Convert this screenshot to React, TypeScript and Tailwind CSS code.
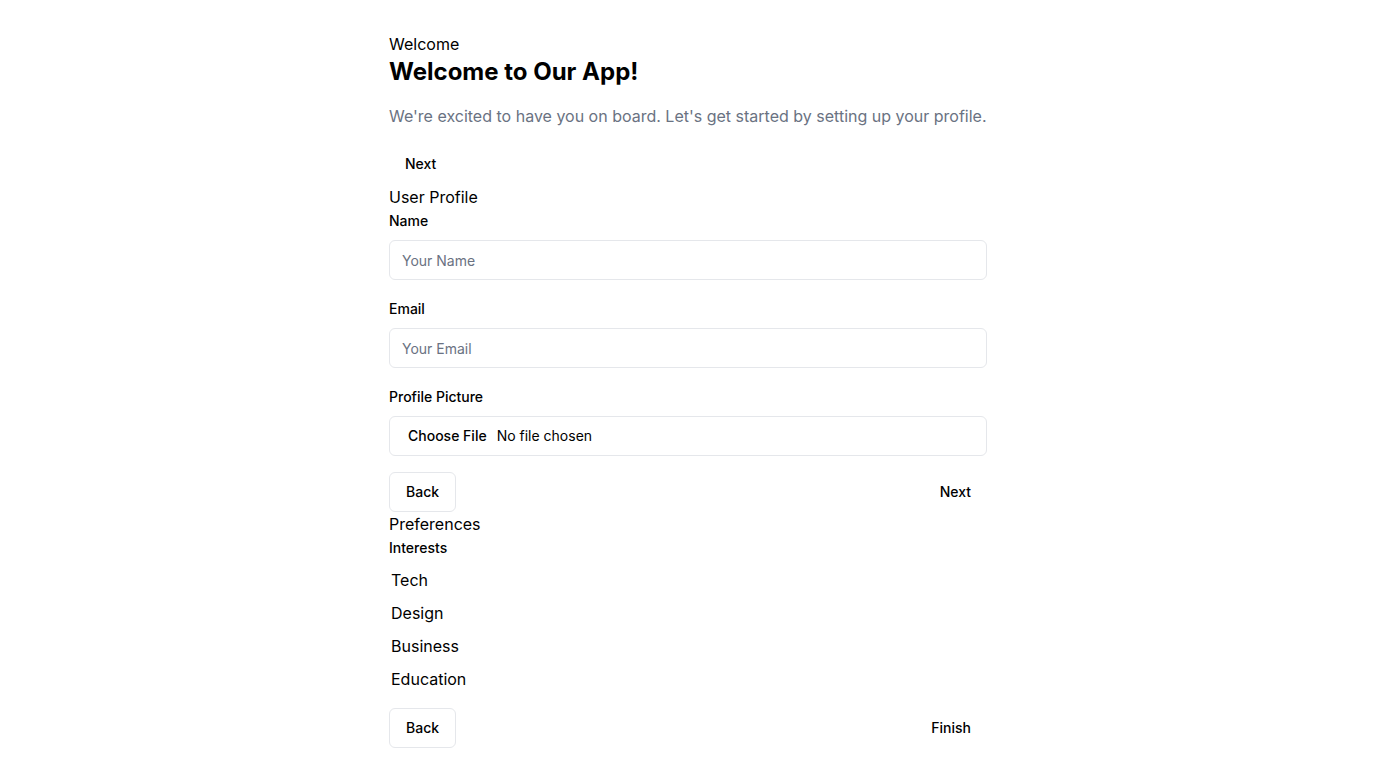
const interests = ["Tech", "Design", "Business", "Education"];

function Field({ label, children, first }: { label: string; children: React.ReactNode; first?: boolean }) {
    return (
        <div className={first ? "" : "mt-[18px]"}>
            <label className="block text-sm font-medium leading-[22px] text-black">{label}</label>
            <div className="mt-2">{children}</div>
        </div>
    );
}

export default function App() {
    return (
        <div className="min-h-screen bg-white font-['Inter',sans-serif] text-black">
            <div className="mx-auto w-[598px] pt-8">
                <p className="text-base leading-6">Welcome</p>
                <h1 className="text-2xl font-bold leading-8">Welcome to Our App!</h1>
                <p className="mt-4 text-base leading-6 text-gray-500">
                    We're excited to have you on board. Let's get started by setting up your profile.
                </p>

                <button className="mt-4 h-10 rounded-md px-4 text-sm font-medium">Next</button>

                <h2 className="text-base leading-[26px]">User Profile</h2>
                <Field label="Name" first>
                    <input
                        placeholder="Your Name"
                        className="h-10 w-full rounded-md border border-gray-200 px-3 text-sm placeholder:text-gray-500 outline-none"
                    />
                </Field>
                <Field label="Email">
                    <input
                        placeholder="Your Email"
                        className="h-10 w-full rounded-md border border-gray-200 px-3 text-sm placeholder:text-gray-500 outline-none"
                    />
                </Field>
                <Field label="Profile Picture">
                    <div className="flex h-10 w-full items-center rounded-md border border-gray-200 px-3 text-sm">
                        <span className="ml-1.5 font-medium">Choose File</span>
                        <span className="ml-2.5">No file chosen</span>
                    </div>
                </Field>

                <div className="mt-4 flex items-center justify-between">
                    <button className="h-10 rounded-md border border-gray-200 px-4 text-sm font-medium">Back</button>
                    <button className="h-10 rounded-md px-4 text-sm font-medium">Next</button>
                </div>

                <h2 className="text-base leading-6">Preferences</h2>
                <label className="block text-sm font-medium leading-6">Interests</label>
                <div className="mt-[3px] flex flex-col">
                    {interests.map((item) => (
                        <label key={item} className="flex h-[33px] items-center pl-0.5 text-base">
                            {item}
                        </label>
                    ))}
                </div>

                <div className="mt-[13px] flex items-center justify-between">
                    <button className="h-10 rounded-md border border-gray-200 px-4 text-sm font-medium">Back</button>
                    <button className="h-10 rounded-md px-4 text-sm font-medium">Finish</button>
                </div>
            </div>
        </div>
    );
}
